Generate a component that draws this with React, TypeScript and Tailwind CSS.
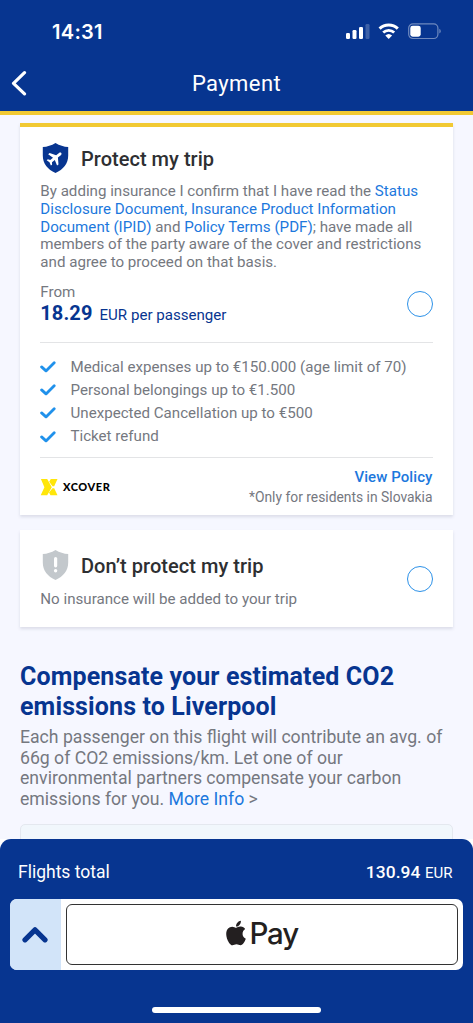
import type { ReactNode } from "react";
import { FaApple } from "react-icons/fa";

function StatusBar() {
  return (
    <div className="flex h-[56px] items-start justify-between pt-[19px] pr-[31px] pl-[52px] text-white">
      <div className="font-['Inter',sans-serif] text-[20px] leading-[26px] font-semibold tracking-[0.3px]">14:31</div>
      <div className="flex pt-[3px]">
        <svg width="26" height="18" viewBox="0 0 26 18" fill="#fff">
          <rect x="0" y="11" width="4" height="6" rx="1.2" />
          <rect x="6.5" y="8" width="4" height="9" rx="1.2" />
          <rect x="13" y="5" width="4" height="12" rx="1.2" />
          <rect x="19.5" y="2" width="4" height="15" rx="1.2" opacity="0.22" />
        </svg>
        <svg className="ml-[6px]" width="22" height="18" viewBox="0 0 22 18" fill="none" stroke="#fff">
          <path d="M1.6 6.600a13 13 0 0 1 18.2 0" strokeWidth="3" />
          <path d="M5.2 10.500a8 8 0 0 1 11 0" strokeWidth="2.8" />
          <path d="M10.7 17l-3.4-3.4a5 5 0 0 1 6.8 0z" fill="#fff" stroke="none" />
        </svg>
        <svg className="ml-[8px]" width="34" height="18" viewBox="0 0 34 18">
          <rect x="0.7" y="1.9" width="29.2" height="14.6" rx="4.2" fill="none" stroke="#fff" strokeOpacity="0.42" strokeWidth="1.2" />
          <rect x="2.3" y="3.7" width="10.4" height="11" rx="2.4" fill="#fff" />
          <path d="M31.4 6.8v4.8c1.8-.8 1.8-4 0-4.8z" fill="#fff" opacity="0.45" />
        </svg>
      </div>
    </div>
  );
}

function Header() {
  return (
    <header className="h-[115px] border-b-[4px] border-[#f1c933] bg-[#073590]">
      <StatusBar />
      <div className="grid h-[55px] grid-cols-[1fr_auto_1fr] items-center text-white">
        <svg className="mb-[2px] ml-[11px]" width="16" height="26" viewBox="0 0 16 26" fill="none" stroke="#fff" strokeWidth="3.200">
          <path d="M13.500 2.700L2.500 13.300l11 10.600" strokeLinejoin="round" strokeLinecap="round" />
        </svg>
        <h1 className="text-[22px] leading-[26px] tracking-[0.42px]">Payment</h1>
      </div>
    </header>
  );
}

const SHIELD = "M13.5 0C17.6 2.5 21.8 3.8 26.2 4.1V12.5C26.2 20.5 21.3 26.6 13.5 30C5.7 26.6.8 20.5.8 12.5V4.1C5.2 3.8 9.4 2.5 13.5 0Z";

function PlaneShield() {
  return (
    <svg width="27" height="30" viewBox="0 0 27 30">
      <path d={SHIELD} fill="#073590" />
      <g transform="translate(13 15) rotate(52) scale(.76) translate(-11.5 -12)">
        <path d="M21 16v-2.400l-7.600-5V3.8C13.400 2.500 12.500 1.500 11.5 1.500S9.600 2.500 9.600 3.8V8.600l-7.600 5V16l7.600-2.200V18.500l-2.600 1.900V22.400l4.500-1.200 4.500 1.200v-2L13.400 18.500v-4.700z" fill="#fff" />
      </g>
    </svg>
  );
}

function WarningShield() {
  return (
    <svg width="27" height="30" viewBox="0 0 27 30">
      <path d={SHIELD} fill="#c3c8cc" />
      <path d="M13.600 8.600v7.200" stroke="#fff" strokeWidth="3.200" strokeLinecap="round" />
      <circle cx="13.600" cy="20.800" r="1.700" fill="#fff" />
    </svg>
  );
}

function Benefit({ children }: { children: ReactNode }) {
  return (
    <li className="flex h-[23.100px] items-center">
      <svg className="mr-[14.500px]" width="16" height="12" viewBox="0 0 16 12" fill="none" stroke="#2091eb" strokeWidth="2.800" strokeLinecap="round" strokeLinejoin="round">
        <path d="M1.600 5.900L6 9.900L14.200 1.700" />
      </svg>
      {children}
    </li>
  );
}

const Radio = () => <div className="size-[26px] rounded-full border border-[#2c91e8]" />;

function Link({ children }: { children: ReactNode }) {
  return <span className="text-[#1c78dd]">{children}</span>;
}

export default function App() {
  return (
    <div className="flex h-[1023px] w-[473px] flex-col overflow-hidden bg-[#f6f7ff] font-['Roboto',sans-serif] text-[#75787f]">
      <Header />
      <main className="h-[724px] px-[20px] pt-[8px]">
        <section className="h-[392px] border-t-[4px] border-[#f1c933] bg-white px-[20px] shadow-[0_2px_3px_rgba(40,45,80,0.13)]">
          <div className="flex h-[56px] items-start pt-[16px]">
            <div className="ml-[2px]"><PlaneShield /></div>
            <h2 className="ml-[12px] text-[20px] leading-[32px] font-medium tracking-[0.03px] text-[#2e2f32]">Protect my trip</h2>
          </div>
          <p className="pl-[0.300px] text-[15.130px] leading-[17.750px] whitespace-nowrap">
            By adding insurance I confirm that I have read the <Link>Status<br />Disclosure Document, Insurance Product Information<br />Document (IPID)</Link> and <Link>Policy Terms (PDF)</Link>; have made all<br />members of the party aware of the cover and restrictions<br />and agree to proceed on that basis.
          </p>
          <div className="flex h-[71px] items-start justify-between border-b border-[#e3e4e6] pt-[11px]">
            <div className="pl-[0.300px]">
              <div className="text-[15.150px] leading-[18px]">From</div>
              <div className="flex items-baseline leading-[24px] text-[#073590]">
                <span className="text-[20px] font-bold tracking-[0.100px]">18.29</span>
                <span className="ml-[7px] text-[15.100px]">EUR per passenger</span>
              </div>
            </div>
            <div className="pt-[8px]"><Radio /></div>
          </div>
          <ul className="h-[115px] border-b border-[#e3e4e6] pt-[13px] text-[15.120px]">
            <Benefit>Medical expenses up to €150.000 (age limit of 70)</Benefit>
            <Benefit>Personal belongings up to €1.500</Benefit>
            <Benefit>Unexpected Cancellation up to €500</Benefit>
            <Benefit>Ticket refund</Benefit>
          </ul>
          <div className="flex justify-between pt-[10px]">
            <div className="flex items-start pt-[11px]">
              <svg width="18" height="17" viewBox="0 0 18 17" fill="#ffe60a">
                <path d="M.9 0h6.300l4.600 8.200-4.600 8H.7l3.700-8z" />
                <path d="M10.800 0h6.700L14.200 7.200h-1.700L9.200 2.800zM12.500 9.200h1.700l3.300 7h-7L9 13.600z" />
              </svg>
              <span className="ml-[5px] font-['Lato',sans-serif] text-[11px] leading-[16px] font-black tracking-[0.550px] text-black">XCOVER</span>
            </div>
            <div className="pr-[0.500px] text-right">
              <div className="text-[15px] leading-[19px] font-medium tracking-[0.080px] text-[#1c78dd]">View Policy</div>
              <div className="text-[13.850px] leading-[20px]">*Only for residents in Slovakia</div>
            </div>
          </div>
        </section>

        <section className="mt-[15px] flex h-[97px] items-start justify-between bg-white px-[20px] shadow-[0_2px_3px_rgba(40,45,80,0.13)]">
          <div>
            <div className="flex items-start pt-[20px]">
              <div className="ml-[2px]"><WarningShield /></div>
              <h2 className="ml-[12px] text-[20px] leading-[32px] font-medium tracking-[0.040px] text-[#2e2f32]">Don’t protect my trip</h2>
            </div>
            <p className="mt-[8px] pl-[0.300px] text-[15.130px] leading-[18px]">No insurance will be added to your trip</p>
          </div>
          <div className="pt-[36px]"><Radio /></div>
        </section>

        <h2 className="mt-[35px] text-[25px] leading-[29.500px] font-bold tracking-[0.120px] whitespace-nowrap text-[#073590]">
          Compensate your estimated CO2<br />emissions to Liverpool
        </h2>
        <p className="mt-[6px] text-[17.650px] leading-[20.500px] whitespace-nowrap">
          Each passenger on this flight will contribute an avg. of<br />66g of CO2 emissions/km. Let one of our<br />environmental partners compensate your carbon<br />emissions for you. <Link>More Info</Link> &gt;
        </p>
        <div className="mt-[15px] h-[40px] rounded-t-[5px] border border-[#e4e8ef] bg-[#f1f7fc]" />
      </main>

      <footer className="relative flex h-[184px] shrink-0 flex-col bg-white">
        <div className="flex h-full flex-col rounded-t-[11px] bg-[#073590] px-[10px] text-white">
          <div className="flex h-[60px] items-center justify-between pt-[7px] pr-[10.500px] pl-[8px]">
            <span className="text-[17.500px]">Flights total</span>
            <span className="text-[17.400px] font-medium tracking-[0.100px]">130.94 <span className="text-[15px] font-normal tracking-[0px]">EUR</span></span>
          </div>
          <div className="flex h-[71px] overflow-hidden rounded-[7px] bg-white">
            <div className="flex w-[50.500px] items-center justify-center bg-[#d2e4f9]">
              <svg width="26" height="17" viewBox="0 0 26 17" fill="none" stroke="#073590" strokeWidth="5.200" strokeLinecap="round" strokeLinejoin="round">
                <path d="M3 13.800L13 3.800L23 13.800" />
              </svg>
            </div>
            <div className="m-[5px] flex flex-1 items-center justify-center rounded-[6px] border border-[#333] text-[#231f20]">
              <FaApple className="mb-[4px] h-[28px] w-[20px]" preserveAspectRatio="none" />
              <span className="mb-[3px] ml-[4px] font-['Inter',sans-serif] text-[29.500px] leading-[36px] font-medium tracking-[-1.200px]">Pay</span>
            </div>
          </div>
          <div className="mx-auto mt-[37px] h-[6px] w-[169px] rounded-full bg-white" />
        </div>
      </footer>
    </div>
  );
}
